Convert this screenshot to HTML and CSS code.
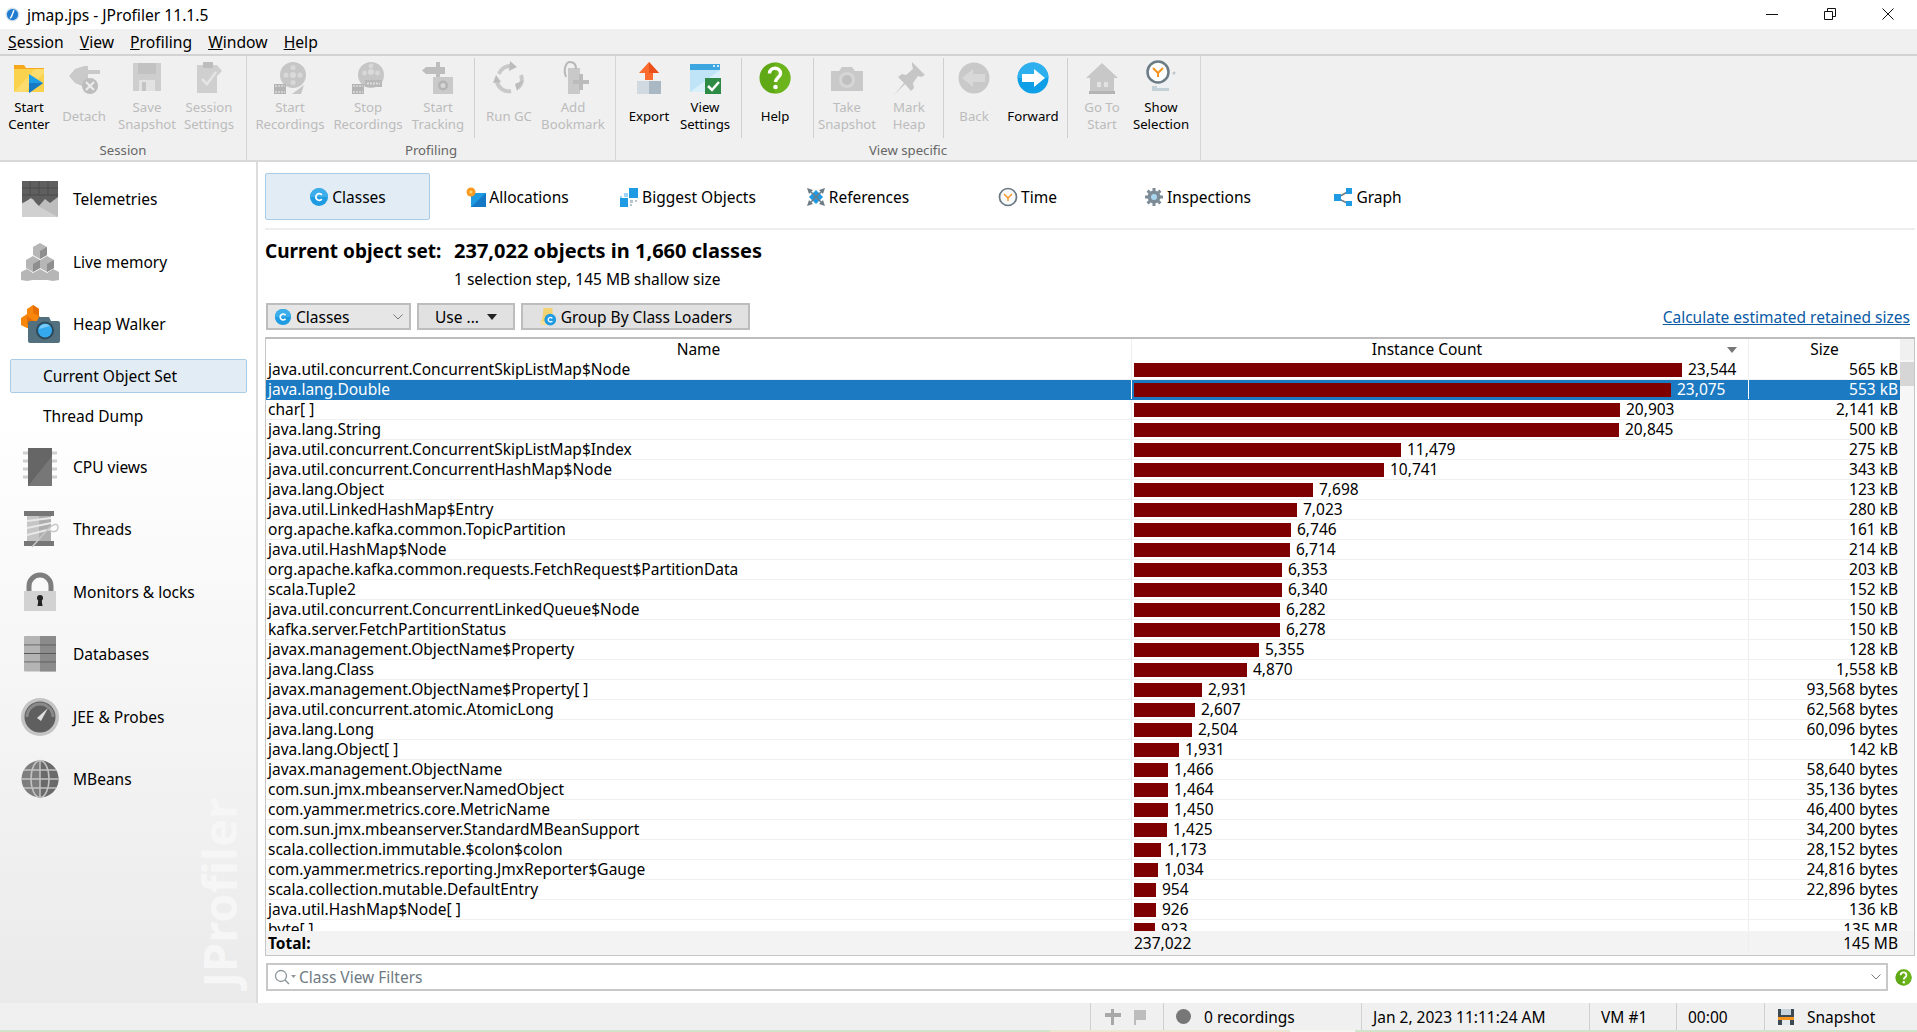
FILE: index.html
```html
<!DOCTYPE html>
<html lang="en">
<head>
<meta charset="utf-8">
<title>jmap.jps - JProfiler 11.1.5</title>
<link rel="stylesheet" href="styles.css">
</head>
<body>
<svg class="defs" aria-hidden="true">
  <symbol id="i-start" viewBox="0 0 36 36"><path d="M3 5h10l2 3h18v4H3z" fill="#f6a81c"/><path d="M3 9h30v23H3z" fill="#fbd24e"/><path d="M3 32L24 9h9v4L14 32z" fill="#fcdc6c"/><path d="M18 14l14 9-14 10z" fill="#1e9de4"/><path d="M18 23h14l-14 10z" fill="#1778c4"/></symbol>
  <symbol id="i-detach" viewBox="0 0 36 36"><path d="M3 16l6-7 9-3h4v4h12v4H22v6h5v3h-5v3h-6l-7-3z" fill="#c9c9c9"/><circle cx="24" cy="26" r="8" fill="#bdbdbd"/><path d="M20 22l8 8M28 22l-8 8" stroke="#eee" stroke-width="2"/></symbol>
  <symbol id="i-save" viewBox="0 0 36 36"><path d="M4 3h28v28H4z" fill="#cecece"/><path d="M9 3h18v11H9z" fill="#c2c2c2"/><path d="M10 20h16v11H10z" fill="#e2e2e2"/><path d="M13 22h4v9h-4z" fill="#c4c4c4"/></symbol>
  <symbol id="i-settings" viewBox="0 0 36 36"><path d="M6 5h20l5 6-5 5v17H6z" fill="#cfcfcf"/><path d="M12 2h10v6H12z" fill="#bdbdbd"/><path d="M11 19l5 5 9-12" fill="none" stroke="#e4e4e4" stroke-width="2.500"/></symbol>
  <symbol id="i-rec" viewBox="0 0 36 36"><circle cx="21" cy="15" r="13" fill="#c6c6c6"/><circle cx="21" cy="15" r="3" fill="#dadada"/><circle cx="21" cy="7.500" r="2.600" fill="#d8d8d8"/><circle cx="14" cy="15" r="2.600" fill="#d8d8d8"/><circle cx="28" cy="15" r="2.600" fill="#d8d8d8"/><circle cx="21" cy="22.500" r="2.600" fill="#d8d8d8"/><path d="M2 24h12v10H2z" fill="#b4b4b4"/><path d="M3 26h10M3 32h10" stroke="#eee" stroke-dasharray="2 1"/><path d="M20 34l12-9-3 9z" fill="#c6c6c6"/></symbol>
  <symbol id="i-stop" viewBox="0 0 36 36"><circle cx="21" cy="15" r="13" fill="#c6c6c6"/><circle cx="21" cy="12" r="3" fill="#dadada"/><circle cx="21" cy="6" r="2.400" fill="#d8d8d8"/><circle cx="14.500" cy="13" r="2.400" fill="#d8d8d8"/><circle cx="27.500" cy="13" r="2.400" fill="#d8d8d8"/><path d="M2 24h12v10H2z" fill="#b4b4b4"/><path d="M3 26h10M3 32h10" stroke="#eee" stroke-dasharray="2 1"/><path d="M15 20h17v7H15z" fill="#b8b8b8"/><path d="M17 23.500h13" stroke="#dcdcdc" stroke-width="2" stroke-dasharray="2 1"/></symbol>
  <symbol id="i-track" viewBox="0 0 36 36"><path d="M16 2h4v5h5v7h-5v3h-4v-3H6l-4-3.500L6 7h10z" fill="#bdbdbd"/><path d="M13 17h20v17H13z" fill="#c9c9c9"/><circle cx="23" cy="25.500" r="5" fill="#b4b4b4"/><circle cx="23" cy="25.500" r="2.500" fill="#d6d6d6"/></symbol>
  <symbol id="i-gc" viewBox="0 0 36 36"><g fill="none" stroke="#c9c9c9" stroke-width="4"><path d="M8 14a12 12 0 0 1 13-8"/><path d="M30 15a12 12 0 0 1-3 13"/><path d="M20 31a12 12 0 0 1-14-9"/></g><path d="M19 1l7 6-8 4zM33 20l-9 4 2 7zM2 23l8-1-5-7z" fill="#bcbcbc"/></symbol>
  <symbol id="i-book" viewBox="0 0 36 36"><path d="M13 8h12v26H13z" fill="#c9c9c9"/><path d="M11 17C8 9 11 2 15 2s6 3 6 7" fill="none" stroke="#b8b8b8" stroke-width="2"/><path d="M24 18h4v6h6v4h-6v6h-4v-6h-6v-4h6z" fill="#bbb" transform="translate(0 -4)"/></symbol>
  <symbol id="i-export" viewBox="0 0 36 36"><path d="M18 2l10 11h-6v7h-8v-7H8z" fill="#fb6b2e"/><path d="M18 2l10 11H18z" fill="#ea4f1c"/><path d="M6 21h24v13H6z" fill="#d1dae0"/><path d="M18 21h12v13H18z" fill="#a9b8c2"/></symbol>
  <symbol id="i-view" viewBox="0 0 36 36"><path d="M3 4h30v28H3z" fill="#d9f0fb"/><path d="M3 4h30v6H3z" fill="#3da5e0"/><path d="M3 32V10h30z" fill="#bfe4f7"/><path d="M26 6h2M30 6h2" stroke="#fff" stroke-width="1.500"/><path d="M18 18h16v16H18z" fill="#2e8b45"/><path d="M21 26l4 4 7-8" fill="none" stroke="#fff" stroke-width="2.500"/></symbol>
  <symbol id="i-help" viewBox="0 0 36 36"><circle cx="18" cy="18" r="15.500" fill="#5fa816"/><path d="M18 2.500a15.500 15.500 0 0 1 0 31z" fill="#71b91f" opacity=".7"/><path d="M12.500 13.500c0-7 11-7 11 0 0 4-5 4-5 8.500" fill="none" stroke="#fff" stroke-width="3.400"/><circle cx="18.500" cy="27" r="2.300" fill="#fff"/></symbol>
  <symbol id="i-camera" viewBox="0 0 36 36"><path d="M2 11h8l3-4h10l3 4h8v20H2z" fill="#c9c9c9"/><circle cx="18" cy="20" r="8" fill="#d6d6d6"/><circle cx="18" cy="20" r="5" fill="#c0c0c0"/></symbol>
  <symbol id="i-pin" viewBox="0 0 36 36"><path d="M21 2l13 13-4 2-3-1-5 7 1 5-3 3-6-7-11 11 10-12-6-6 4-3 4 1 7-6-1-4z" fill="#c6c6c6"/></symbol>
  <symbol id="i-back" viewBox="0 0 36 36"><circle cx="18" cy="18" r="15.500" fill="#c9c9c9"/><path d="M6 18l11-9v5h12v8H17v5z" fill="#d8d8d8"/></symbol>
  <symbol id="i-fwd" viewBox="0 0 36 36"><circle cx="18" cy="18" r="15.500" fill="#0e9fe6"/><path d="M2.500 18a15.500 15.500 0 0 1 31 0z" fill="#2fb0ee"/><path d="M30 18l-11-9v5H7v8h12v5z" fill="#fff"/></symbol>
  <symbol id="i-home" viewBox="0 0 36 36"><path d="M18 3L2 18h4v14h24V18h4z" fill="#c8c8c8"/><path d="M13 22h4v5h-4zM20 22h4v5h-4z" fill="#e2e2e2"/><path d="M5 31h26v3H5z" fill="#b4b4b4"/></symbol>
  <symbol id="i-show" viewBox="0 0 36 36"><path d="M9 26h17v5H9z" fill="#c3d0d8"/><path d="M14 15h15v13H14z" fill="#eef1f3"/><circle cx="31" cy="13" r="1.500" fill="#bcc6cc"/><circle cx="15" cy="12" r="10.500" fill="#fff" stroke="#6c7c86" stroke-width="2.500"/><path d="M10 8l5 5 5-5M15 13v4" fill="none" stroke="#f7941d" stroke-width="2"/></symbol>
  <symbol id="i-class" viewBox="0 0 20 20"><circle cx="10" cy="10" r="9" fill="#1f9be2"/><path d="M1 10a9 9 0 0 1 18 0z" fill="#3caeeb"/><path d="M12.800 8a3.300 3.300 0 1 0 0 4" fill="none" stroke="#fff" stroke-width="1.800"/></symbol>
  <symbol id="i-alloc" viewBox="0 0 20 20"><path d="M5 6h15v14H5z" fill="#1e9be2"/><path d="M5 20L20 6v14z" fill="#1478c4"/><circle cx="5" cy="5" r="4.500" fill="#f79a1e"/><circle cx="5" cy="5" r="1.600" fill="#ffd27a"/></symbol>
  <symbol id="i-big" viewBox="0 0 20 20"><path d="M10 1h9v10h-9z" fill="#1e9be2"/><path d="M1 11h8v9H1z" fill="#1e9be2"/><path d="M5 6h4v4H5zM1 9h2v2H1z" fill="#9fd4f3"/><path d="M11 13h3v3h-3zM16 13h2v2h-2zM11 17h2v2h-2z" fill="#b8c4cc"/></symbol>
  <symbol id="i-refs" viewBox="0 0 20 20"><path d="M5 5h10v10H5z" fill="#1e9be2" transform="rotate(45 10 10)"/><path d="M1 1l6 2-4 4zM19 1l-6 2 4 4zM1 19l6-2-4-4zM19 19l-6-2 4-4z" fill="#6d7c86"/><path d="M3 3l14 14M17 3L3 17" stroke="#6d7c86" stroke-width="1.600"/></symbol>
  <symbol id="i-time" viewBox="0 0 20 20"><circle cx="10" cy="10" r="8.500" fill="#f7f9fa" stroke="#67767f" stroke-width="1.700"/><path d="M6 7l4 4 4-4M10 11v3" fill="none" stroke="#f7941d" stroke-width="1.400"/></symbol>
  <symbol id="i-gear" viewBox="0 0 20 20"><circle cx="10" cy="10" r="6.500" fill="#7d8c96"/><g stroke="#7d8c96" stroke-width="3"><path d="M10 1v18M1 10h18M3.600 3.600l12.800 12.800M16.400 3.600L3.600 16.400"/></g><circle cx="10" cy="10" r="3" fill="#a9d6f0"/></symbol>
  <symbol id="i-graph" viewBox="0 0 20 20"><path d="M4 11L16 4M4 11l12 6" stroke="#6d7c86" stroke-width="1.500"/><path d="M1 7h7v7H1z" fill="#1e9be2"/><path d="M13 1h6v6h-6zM13 14h6v5h-6z" fill="#1e9be2"/></symbol>
  <symbol id="i-loader" viewBox="0 0 20 20"><path d="M5 0h10v15H1c2-1 3-3 3-5z" fill="#f2d271"/><path d="M1 15h12v4H3z" fill="#f6e09a"/><circle cx="12.500" cy="13" r="6.500" fill="#1f9be2"/><path d="M14.800 11.500a2.500 2.500 0 1 0 0 3" fill="none" stroke="#fff" stroke-width="1.500"/></symbol>
  <symbol id="s-tele" viewBox="0 0 40 40"><path d="M2 2h36v36H2z" fill="#bdbdbd"/><path d="M2 2h36v16l-8 6-5-4-7 8-5-8-11 4z" fill="#5f5f5f"/><path d="M2 25l9-6 9 9 18 10H2z" fill="#d0d0d0"/><path d="M2 9h36M2 16h36M10 2v14M19 2v14M28 2v14" stroke="#4c4c4c"/></symbol>
  <symbol id="s-live" viewBox="0 0 40 40"><g fill="#b6b6b6"><path d="M20 1l7 4v8l-7 4-7-4V5z"/><path d="M13 14l7 4v8l-7 4-7-4v-8z"/><path d="M27 14l7 4v8l-7 4-7-4v-8z"/><path d="M7 27l6 4v7l-6 1-6-1v-8z"/><path d="M20 27l7 4v7h-14v-7z"/><path d="M33 27l6 3v8l-6 1-6-1v-7z"/></g><path d="M20 9v8l7-4V5zM13 22v8l7-4v-8zM27 22v8l7-4v-8z" fill="#8e8e8e"/></symbol>
  <symbol id="s-heap" viewBox="0 0 40 40"><path d="M13 1l6 4v7l6 4v8H7l-6-3v-7l6-4V5z" fill="#f7860b"/><path d="M13 9V1l6 4v7zM7 20v-8l6 4v7z" fill="#e56f00"/><path d="M10 17h7l2-4h10l2 4h7a2 2 0 0 1 2 2v18a2 2 0 0 1-2 2H10a2 2 0 0 1-2-2V19a2 2 0 0 1 2-2z" fill="#53707f"/><circle cx="25" cy="26.500" r="9" fill="#2c4959"/><circle cx="25" cy="26.500" r="7" fill="#35a9ee"/><path d="M19 25a6.500 6.500 0 0 1 11-3z" fill="#7accf6"/></symbol>
  <symbol id="s-cpu" viewBox="0 0 40 40"><path d="M3 6h34M3 14h34M3 22h34M3 30h34" stroke="#cfcfcf" stroke-width="3"/><path d="M8 1h24v38H8z" fill="#5e5e5e"/><path d="M8 39L32 6v33z" fill="#777"/><path d="M8 1h24v8L8 39z" fill="#666"/></symbol>
  <symbol id="s-thread" viewBox="0 0 40 40"><path d="M4 2h30v5H4zM4 32h30v5H4z" fill="#767676"/><path d="M7 7h24v25H7z" fill="#c6c6c6"/><path d="M19 7h12v25H19z" fill="#aeaeae"/><path d="M7 12l24-3M7 19l24-5M7 26l24-6" stroke="#e8e8e8" stroke-width="2"/><path d="M12 38L30 18q8-6 8 1-1 5-8 3" fill="none" stroke="#c8c8c8" stroke-width="1.500"/></symbol>
  <symbol id="s-lock" viewBox="0 0 40 40"><path d="M9 21V14a11 11 0 0 1 22 0v7" fill="none" stroke="#7e7e7e" stroke-width="5"/><path d="M4 19h32v20H4z" fill="#d2d2d2"/><circle cx="20" cy="26" r="3" fill="#222"/><path d="M18.500 27h3l1 7h-5z" fill="#222"/></symbol>
  <symbol id="s-db" viewBox="0 0 40 40"><g fill="#b4b4b4"><rect x="4" y="2" width="32" height="9" rx="1"/><rect x="4" y="11.500" width="32" height="8"/><rect x="4" y="20" width="32" height="8"/><rect x="4" y="28.500" width="32" height="9" rx="1"/></g><path d="M20 2h16v35.500H20z" fill="#7e7e7e" opacity=".75"/><path d="M4 11h32M4 19.500h32M4 28h32" stroke="#5a5a5a"/></symbol>
  <symbol id="s-jee" viewBox="0 0 40 40"><circle cx="20" cy="20" r="19" fill="#c4c4c4"/><circle cx="20" cy="20" r="15.500" fill="#5f5f5f"/><path d="M7 20a13 13 0 0 1 26 0" fill="none" stroke="#8a8a8a" stroke-width="3"/><path d="M28 11L21 24l-4-3z" fill="#e0e0e0"/></symbol>
  <symbol id="s-mb" viewBox="0 0 40 40"><circle cx="20" cy="20" r="18.500" fill="#7d7d7d"/><path d="M20 1.500a18.500 18.500 0 0 1 0 37z" fill="#6a6a6a"/><g fill="none" stroke="#c2c2c2" stroke-width="1.500"><ellipse cx="20" cy="20" rx="9" ry="18.500"/><path d="M20 1.500v37M1.500 20h37M4 11h32M4 29h32"/></g></symbol>
  <symbol id="i-post" viewBox="0 0 18 18"><path d="M7 1h3v4h7v4h-7v8H7V9H1V5h6z" fill="#a8a8a8"/></symbol>
  <symbol id="i-flag" viewBox="0 0 18 18"><path d="M3 2h12v10H5v5H3z" fill="#bdbdbd"/></symbol>
  <symbol id="i-disk" viewBox="0 0 18 18"><path d="M1 1h16v16H1z" fill="#3c4a53"/><path d="M4 1h10v6H4z" fill="#c9d5dc"/><path d="M1 9h16v3H1z" fill="#f7941d"/><path d="M5 12h8v5H5z" fill="#e6ebee"/></symbol>
  <symbol id="i-search" viewBox="0 0 24 18"><circle cx="8" cy="8" r="5.500" fill="none" stroke="#8c969c" stroke-width="1.300"/><path d="M12 12l4 4" stroke="#8c969c" stroke-width="1.400"/><path d="M18 7h5l-2.500 3z" fill="#8c969c"/></symbol>
</svg>

<header class="titlebar">
  <svg class="appicon" viewBox="0 0 16 16"><circle cx="8" cy="8" r="7.500" fill="#d5e3ee"/><circle cx="8" cy="8" r="6" fill="#1f7cd0"/><path d="M9.500 3.500L7 10l-1.500 2" fill="none" stroke="#fff" stroke-width="1.500"/></svg>
  <span class="apptitle">jmap.jps - JProfiler 11.1.5</span>
  <div class="winctl">
    <svg class="wc" viewBox="0 0 12 12"><path d="M0 6.500h12" stroke="#111"/></svg>
    <svg class="wc" viewBox="0 0 12 12"><path d="M.5 3.500h8v8h-8zM3.500 3.500v-3h8v8h-3" fill="none" stroke="#111"/></svg>
    <svg class="wc" viewBox="0 0 12 12"><path d="M.5.500l11 11M11.500.500l-11 11" stroke="#111"/></svg>
  </div>
</header>

<nav class="menubar">
  <span class="mi"><u>S</u>ession</span><span class="mi"><u>V</u>iew</span><span class="mi"><u>P</u>rofiling</span><span class="mi"><u>W</u>indow</span><span class="mi"><u>H</u>elp</span>
</nav>

<div class="toolbar">
  <section class="group">
    <div class="subs pad-g1">
      <div class="tb w54"><svg class="ti"><use href="#i-start"/></svg><span class="tl">Start<br>Center</span></div>
      <div class="tb off w56"><svg class="ti"><use href="#i-detach"/></svg><span class="tl one">Detach</span></div>
      <div class="tb off w70"><svg class="ti"><use href="#i-save"/></svg><span class="tl">Save<br>Snapshot</span></div>
      <div class="tb off w54"><svg class="ti"><use href="#i-settings"/></svg><span class="tl">Session<br>Settings</span></div>
    </div>
    <div class="gl">Session</div>
  </section>
  <section class="group">
    <div class="subs">
      <div class="sub pad-a">
        <div class="tb off w76"><svg class="ti"><use href="#i-rec"/></svg><span class="tl">Start<br>Recordings</span></div>
        <div class="tb off w80"><svg class="ti"><use href="#i-stop"/></svg><span class="tl">Stop<br>Recordings</span></div>
        <div class="tb off w60"><svg class="ti"><use href="#i-track"/></svg><span class="tl">Start<br>Tracking</span></div>
      </div>
      <div class="sub last pad-b">
        <div class="tb off w68"><svg class="ti"><use href="#i-gc"/></svg><span class="tl one">Run GC</span></div>
        <div class="tb off w60"><svg class="ti"><use href="#i-book"/></svg><span class="tl">Add<br>Bookmark</span></div>
      </div>
    </div>
    <div class="gl">Profiling</div>
  </section>
  <section class="group">
    <div class="subs">
      <div class="sub pad-c">
        <div class="tb w58"><svg class="ti"><use href="#i-export"/></svg><span class="tl one">Export</span></div>
        <div class="tb w54"><svg class="ti"><use href="#i-view"/></svg><span class="tl">View<br>Settings</span></div>
      </div>
      <div class="sub pad-d">
        <div class="tb w66"><svg class="ti"><use href="#i-help"/></svg><span class="tl one">Help</span></div>
      </div>
      <div class="sub pad-d">
        <div class="tb off w66"><svg class="ti"><use href="#i-camera"/></svg><span class="tl">Take<br>Snapshot</span></div>
        <div class="tb off w58"><svg class="ti"><use href="#i-pin"/></svg><span class="tl">Mark<br>Heap</span></div>
      </div>
      <div class="sub pad-d">
        <div class="tb off w60"><svg class="ti"><use href="#i-back"/></svg><span class="tl one">Back</span></div>
        <div class="tb w58"><svg class="ti"><use href="#i-fwd"/></svg><span class="tl one">Forward</span></div>
      </div>
      <div class="sub last pad-e">
        <div class="tb off w62"><svg class="ti"><use href="#i-home"/></svg><span class="tl">Go To<br>Start</span></div>
        <div class="tb w56"><svg class="ti"><use href="#i-show"/></svg><span class="tl">Show<br>Selection</span></div>
      </div>
    </div>
    <div class="gl">View specific</div>
  </section>
</div>

<div class="workspace">
  <aside class="sidebar">
    <div class="si"><svg class="sic"><use href="#s-tele"/></svg><span>Telemetries</span></div>
    <div class="si"><svg class="sic"><use href="#s-live"/></svg><span>Live memory</span></div>
    <div class="si"><svg class="sic"><use href="#s-heap"/></svg><span>Heap Walker</span></div>
    <div class="sub-si"><span class="sub-in sel">Current Object Set</span></div>
    <div class="sub-si"><span class="sub-in">Thread Dump</span></div>
    <div class="si"><svg class="sic"><use href="#s-cpu"/></svg><span>CPU views</span></div>
    <div class="si"><svg class="sic"><use href="#s-thread"/></svg><span>Threads</span></div>
    <div class="si"><svg class="sic"><use href="#s-lock"/></svg><span>Monitors &amp; locks</span></div>
    <div class="si"><svg class="sic"><use href="#s-db"/></svg><span>Databases</span></div>
    <div class="si"><svg class="sic"><use href="#s-jee"/></svg><span>JEE &amp; Probes</span></div>
    <div class="si"><svg class="sic"><use href="#s-mb"/></svg><span>MBeans</span></div>
    <div class="watermark">JProfiler</div>
  </aside>

  <main class="main">
    <div class="tabs">
      <div class="tab active"><svg class="tic"><use href="#i-class"/></svg>Classes</div>
      <div class="tab"><svg class="tic"><use href="#i-alloc"/></svg>Allocations</div>
      <div class="tab"><svg class="tic"><use href="#i-big"/></svg>Biggest Objects</div>
      <div class="tab"><svg class="tic"><use href="#i-refs"/></svg>References</div>
      <div class="tab"><svg class="tic"><use href="#i-time"/></svg>Time</div>
      <div class="tab"><svg class="tic"><use href="#i-gear"/></svg>Inspections</div>
      <div class="tab"><svg class="tic"><use href="#i-graph"/></svg>Graph</div>
    </div>
    <div class="head">
      <h1 class="h-label">Current object set:</h1>
      <h1 class="h-value">237,022 objects in 1,660 classes</h1>
      <p class="h-sub">1 selection step, 145 MB shallow size</p>
    </div>
    <div class="controls">
      <div class="btn combo"><svg class="bic"><use href="#i-class"/></svg><span>Classes</span><svg class="chev" viewBox="0 0 10 6"><path d="M.5.500L5 5 9.500.500" fill="none" stroke="#777"/></svg></div>
      <div class="btn use">Use ...<span class="tri"></span></div>
      <div class="btn group-btn"><svg class="bic"><use href="#i-loader"/></svg>Group By Class Loaders</div>
      <a class="link" href="#">Calculate estimated retained sizes</a>
    </div>
    <div class="table">
      <div class="thead">
        <div class="th c-name">Name</div>
        <div class="th c-count">Instance Count<span class="sort"></span></div>
        <div class="th c-size">Size</div>
        <div class="th-scroll"></div>
      </div>
      <div class="tbody">
        <div class="rows">
          <div class="row"><div class="c-name td">java.util.concurrent.ConcurrentSkipListMap$Node</div><div class="c-count td"><i class="bar" style="width:548px"></i>23,544</div><div class="c-size td">565 kB</div></div>
          <div class="row selected"><div class="c-name td">java.lang.Double</div><div class="c-count td"><i class="bar" style="width:537px"></i>23,075</div><div class="c-size td">553 kB</div></div>
          <div class="row"><div class="c-name td">char[ ]</div><div class="c-count td"><i class="bar" style="width:486px"></i>20,903</div><div class="c-size td">2,141 kB</div></div>
          <div class="row"><div class="c-name td">java.lang.String</div><div class="c-count td"><i class="bar" style="width:485px"></i>20,845</div><div class="c-size td">500 kB</div></div>
          <div class="row"><div class="c-name td">java.util.concurrent.ConcurrentSkipListMap$Index</div><div class="c-count td"><i class="bar" style="width:267px"></i>11,479</div><div class="c-size td">275 kB</div></div>
          <div class="row"><div class="c-name td">java.util.concurrent.ConcurrentHashMap$Node</div><div class="c-count td"><i class="bar" style="width:250px"></i>10,741</div><div class="c-size td">343 kB</div></div>
          <div class="row"><div class="c-name td">java.lang.Object</div><div class="c-count td"><i class="bar" style="width:179px"></i>7,698</div><div class="c-size td">123 kB</div></div>
          <div class="row"><div class="c-name td">java.util.LinkedHashMap$Entry</div><div class="c-count td"><i class="bar" style="width:163px"></i>7,023</div><div class="c-size td">280 kB</div></div>
          <div class="row"><div class="c-name td">org.apache.kafka.common.TopicPartition</div><div class="c-count td"><i class="bar" style="width:157px"></i>6,746</div><div class="c-size td">161 kB</div></div>
          <div class="row"><div class="c-name td">java.util.HashMap$Node</div><div class="c-count td"><i class="bar" style="width:156px"></i>6,714</div><div class="c-size td">214 kB</div></div>
          <div class="row"><div class="c-name td">org.apache.kafka.common.requests.FetchRequest$PartitionData</div><div class="c-count td"><i class="bar" style="width:148px"></i>6,353</div><div class="c-size td">203 kB</div></div>
          <div class="row"><div class="c-name td">scala.Tuple2</div><div class="c-count td"><i class="bar" style="width:148px"></i>6,340</div><div class="c-size td">152 kB</div></div>
          <div class="row"><div class="c-name td">java.util.concurrent.ConcurrentLinkedQueue$Node</div><div class="c-count td"><i class="bar" style="width:146px"></i>6,282</div><div class="c-size td">150 kB</div></div>
          <div class="row"><div class="c-name td">kafka.server.FetchPartitionStatus</div><div class="c-count td"><i class="bar" style="width:146px"></i>6,278</div><div class="c-size td">150 kB</div></div>
          <div class="row"><div class="c-name td">javax.management.ObjectName$Property</div><div class="c-count td"><i class="bar" style="width:125px"></i>5,355</div><div class="c-size td">128 kB</div></div>
          <div class="row"><div class="c-name td">java.lang.Class</div><div class="c-count td"><i class="bar" style="width:113px"></i>4,870</div><div class="c-size td">1,558 kB</div></div>
          <div class="row"><div class="c-name td">javax.management.ObjectName$Property[ ]</div><div class="c-count td"><i class="bar" style="width:68px"></i>2,931</div><div class="c-size td">93,568 bytes</div></div>
          <div class="row"><div class="c-name td">java.util.concurrent.atomic.AtomicLong</div><div class="c-count td"><i class="bar" style="width:61px"></i>2,607</div><div class="c-size td">62,568 bytes</div></div>
          <div class="row"><div class="c-name td">java.lang.Long</div><div class="c-count td"><i class="bar" style="width:58px"></i>2,504</div><div class="c-size td">60,096 bytes</div></div>
          <div class="row"><div class="c-name td">java.lang.Object[ ]</div><div class="c-count td"><i class="bar" style="width:45px"></i>1,931</div><div class="c-size td">142 kB</div></div>
          <div class="row"><div class="c-name td">javax.management.ObjectName</div><div class="c-count td"><i class="bar" style="width:34px"></i>1,466</div><div class="c-size td">58,640 bytes</div></div>
          <div class="row"><div class="c-name td">com.sun.jmx.mbeanserver.NamedObject</div><div class="c-count td"><i class="bar" style="width:34px"></i>1,464</div><div class="c-size td">35,136 bytes</div></div>
          <div class="row"><div class="c-name td">com.yammer.metrics.core.MetricName</div><div class="c-count td"><i class="bar" style="width:34px"></i>1,450</div><div class="c-size td">46,400 bytes</div></div>
          <div class="row"><div class="c-name td">com.sun.jmx.mbeanserver.StandardMBeanSupport</div><div class="c-count td"><i class="bar" style="width:33px"></i>1,425</div><div class="c-size td">34,200 bytes</div></div>
          <div class="row"><div class="c-name td">scala.collection.immutable.$colon$colon</div><div class="c-count td"><i class="bar" style="width:27px"></i>1,173</div><div class="c-size td">28,152 bytes</div></div>
          <div class="row"><div class="c-name td">com.yammer.metrics.reporting.JmxReporter$Gauge</div><div class="c-count td"><i class="bar" style="width:24px"></i>1,034</div><div class="c-size td">24,816 bytes</div></div>
          <div class="row"><div class="c-name td">scala.collection.mutable.DefaultEntry</div><div class="c-count td"><i class="bar" style="width:22px"></i>954</div><div class="c-size td">22,896 bytes</div></div>
          <div class="row"><div class="c-name td">java.util.HashMap$Node[ ]</div><div class="c-count td"><i class="bar" style="width:22px"></i>926</div><div class="c-size td">136 kB</div></div>
          <div class="row"><div class="c-name td">byte[ ]</div><div class="c-count td"><i class="bar" style="width:21px"></i>923</div><div class="c-size td">135 MB</div></div>
        </div>
        <div class="scroll"><div class="thumb"></div></div>
      </div>
      <div class="tfoot">
        <div class="c-name td total">Total:</div>
        <div class="c-count td">237,022</div>
        <div class="c-size td">145 MB</div>
      </div>
    </div>
    <div class="filter-row">
      <div class="filter"><svg class="sic-s"><use href="#i-search"/></svg><span class="ph">Class View Filters</span><svg class="chev" viewBox="0 0 10 6"><path d="M.5.500L5 5 9.500.500" fill="none" stroke="#777"/></svg></div>
      <svg class="fhelp"><use href="#i-help"/></svg>
    </div>
  </main>
</div>

<footer class="status">
  <div class="st st-1"></div>
  <div class="st st-2"><svg class="sti"><use href="#i-post"/></svg><svg class="sti"><use href="#i-flag"/></svg></div>
  <div class="st st-3"><span class="dot"></span>0 recordings</div>
  <div class="st st-4">Jan 2, 2023 11:11:24 AM</div>
  <div class="st st-5">VM #1</div>
  <div class="st st-6">00:00</div>
  <div class="st st-7"><svg class="sti"><use href="#i-disk"/></svg>Snapshot</div>
</footer>
<div class="strip"></div>
</body>
</html>
```

FILE: styles.css
```css
* { box-sizing: border-box; }
html, body { margin: 0; padding: 0; height: 100%; overflow: hidden; }
body {
  display: flex;
  flex-direction: column;
  width: 1917px;
  height: 1032px;
  background: #fff;
  color: #000;
  font-family: "Noto Sans", "Open Sans", sans-serif;
  font-size: 15.500px;
}
.defs { position: absolute; width: 0; height: 0; }

.titlebar { height: 29px; display: flex; align-items: center; padding-left: 5px; flex: none; }
.appicon { width: 15px; height: 15px; margin-right: 7px; }
.apptitle { font-size: 15.600px; }
.winctl { margin-left: auto; display: flex; padding-right: 23px; }
.wc { width: 12px; height: 12px; margin-left: 46px; margin-top: -2px; }
.winctl .wc:first-child { margin-left: 0; }

.menubar { height: 25px; background: #f0f0f0; display: flex; align-items: center; flex: none; padding-left: 8px; }
.mi { font-size: 15.700px; margin-right: 16px; }

.toolbar { height: 108px; flex: none; display: flex; background: #f0f0f0; border-top: 2px solid #d2d2d2; border-bottom: 2px solid #d8d8d8; }
.group { display: flex; flex-direction: column; border-right: 1px solid #d6d6d6; }
.subs { display: flex; height: 84px; }
.sub { display: flex; height: 80px; border-right: 1px solid #d0d0d0; margin-top: 2px; }
.sub.last { border-right: 0; }
.pad-g1 { padding: 0 10px 0 2px; }
.pad-a { padding: 0 6px 0 5px; }
.pad-b { padding: 0 12px 0 0; }
.pad-c { padding: 0 9px 0 4px; }
.pad-d { padding: 0 5px 0 0; }
.pad-e { padding: 0 11px 0 3px; }
.tb { display: flex; flex-direction: column; align-items: center; flex: none; padding-top: 2px; }
.subs.pad-g1 .tb { padding-top: 4px; }
.ti { width: 36px; height: 36px; flex: none; margin-bottom: 3px; }
.tl { display: block; height: 35px; text-align: center; font-size: 13.200px; line-height: 17px; white-space: nowrap; }
.tl.one { line-height: 35px; }
.off { color: #bcbcbc; }
.w54 { width: 54px; } .w56 { width: 56px; } .w58 { width: 58px; } .w60 { width: 60px; }
.w62 { width: 62px; } .w66 { width: 66px; } .w68 { width: 68px; } .w70 { width: 70px; }
.w76 { width: 76px; } .w80 { width: 80px; }
.gl { text-align: center; font-size: 13.200px; line-height: 20px; color: #666; }

.workspace { flex: 1; min-height: 0; display: flex; }
.sidebar {
  position: relative;
  width: 258px;
  flex: none;
  padding-top: 6px;
  border-right: 2px solid #dcdcdc;
  background: linear-gradient(#fff 0%, #fff 30%, #eaeaea 100%);
}
.si { height: 62.500px; display: flex; align-items: center; padding-left: 20px; }
.sic { width: 40px; height: 40px; margin-right: 13px; flex: none; }
.sub-si { height: 40px; padding: 3px 9px 3px 10px; }
.sub-in { display: flex; align-items: center; height: 34px; padding-left: 32px; border: 1px solid transparent; border-radius: 2px; }
.sel { background: #e1ecf5; border-color: #a9cde8; }
.watermark {
  position: absolute;
  left: 194px;
  bottom: 16px;
  font-size: 47px;
  font-weight: 700;
  line-height: 50px;
  color: #f6f6f6;
  writing-mode: vertical-rl;
  transform: rotate(180deg);
}

.main { flex: 1; min-width: 0; display: flex; flex-direction: column; padding: 11px 2px 12px 7px; }
.tabs { display: flex; height: 57px; flex: none; padding-bottom: 8px; border-bottom: 2px solid #eee; gap: 5px; }
.tab { width: 165px; display: flex; align-items: center; justify-content: center; border: 1px solid transparent; border-radius: 2px; }
.tab.active { background: #e1ecf5; border-color: #a9cde8; }
.tic { width: 20px; height: 20px; margin-right: 3px; flex: none; }

.head { display: grid; grid-template-columns: 189px 1fr; flex: none; margin-top: 8px; }
.h-label { margin: 0; font-size: 19px; line-height: 26px; font-weight: 700; }
.h-value { margin: 0; font-size: 20px; line-height: 26px; font-weight: 700; }
.h-sub { grid-column: 2; margin: 4px 0 0; font-size: 15.500px; line-height: 22px; }

.controls { display: flex; flex: none; height: 27px; margin-top: 13px; gap: 6px; padding-left: 1px; align-items: stretch; }
.btn { display: flex; align-items: center; justify-content: center; background: #e1e1e1; border: 2px solid #bdbdbd; }
.combo { width: 145px; justify-content: flex-start; padding-left: 6px; background: #e6e6e6; }
.use { width: 98px; }
.group-btn { width: 229px; }
.bic { width: 18px; height: 18px; margin-right: 4px; flex: none; }
.chev { width: 10px; height: 6px; margin-left: auto; margin-right: 6px; flex: none; }
.tri { width: 0; height: 0; margin-left: 8px; border: 5px solid transparent; border-top: 6px solid #222; border-bottom: 0; }
.link { margin-left: auto; align-self: center; color: #0b5aa6; margin-right: 5px; }

.table { flex: 1; min-height: 0; margin-top: 7px; display: flex; flex-direction: column; border: 1px solid #c6c6c6; border-top: 2px solid #bdbdbd; }
.thead { display: flex; height: 21px; flex: none; }
.th { text-align: center; line-height: 21px; position: relative; }
.c-name { width: 865px; flex: none; }
.c-count { width: 618px; flex: none; }
.c-size { width: 151px; flex: none; }
.th.c-count { border-left: 1px solid #eee; border-right: 1px solid #eee; padding-right: 26px; }
.th-scroll { flex: 1; background: #f0f0f0; }
.sort { position: absolute; right: 11px; top: 8px; border: 5px solid transparent; border-top: 6px solid #777; border-bottom: 0; }
.tbody { flex: 1; min-height: 0; display: flex; overflow: hidden; }
.rows { width: 1634px; flex: none; }
.row { display: flex; height: 20px; border-bottom: 1px solid #f0f0f0; }
.td { line-height: 19px; white-space: nowrap; }
.row .c-name { padding-left: 2px; }
.row .c-count, .tfoot .c-count { display: flex; align-items: center; padding-left: 2px; border-left: 1px solid #eee; border-right: 1px solid #eee; }
.bar { display: block; height: 14px; margin-right: 6px; background: #7f0000; flex: none; }
.c-size.td { text-align: right; padding-right: 2px; }
.row.selected { background: #1b7ac2; color: #fff; border-bottom-color: #1b7ac2; }
.row.selected .c-count { border-color: #fff; }
.scroll { flex: 1; background: #f6f6f6; padding-top: 2px; background-clip: padding-box; }
.thumb { height: 24px; background: #d6d6d6; }
.tfoot { display: flex; height: 24px; flex: none; background: #f3f3f3; align-items: center; }
.total { font-weight: 700; padding-left: 2px; }

.filter-row { display: flex; flex: none; height: 28px; margin-top: 7px; align-items: center; padding-left: 1px; gap: 6px; }
.filter { flex: 1; height: 28px; display: flex; align-items: center; border: 2px solid #c8c8c8; padding-left: 5px; }
.sic-s { width: 24px; height: 18px; margin-right: 2px; flex: none; }
.ph { color: #6f7a82; }
.filter .chev { margin-right: 5px; }
.fhelp { width: 19px; height: 19px; flex: none; margin-right: 2px; }

.status { height: 27px; flex: none; display: flex; align-items: center; background: #f0f0f0; }
.st { height: 100%; display: flex; align-items: center; border-left: 1px solid #d0d0d0; flex: none; }
.st-1 { width: 1090px; border-left: 0; }
.st-2 { width: 73px; padding-left: 13px; gap: 9px; }
.st-3 { width: 198px; padding-left: 12px; }
.st-4 { width: 228px; padding-left: 11px; }
.st-5 { width: 87px; padding-left: 11px; }
.st-6 { width: 88px; padding-left: 11px; }
.st-7 { flex: 1; padding-left: 12px; }
.sti { width: 18px; height: 18px; flex: none; }
.st-7 .sti { margin-right: 12px; }
.dot { width: 15px; height: 15px; border-radius: 50%; background: #777; margin-right: 13px; flex: none; }
.strip { height: 2px; flex: none; background: linear-gradient(90deg, #cfe4c9 0, #cfe4c9 1050px, #ebe7d2 1050px, #ebe7d2 1290px, #f4f4f0 1290px, #f4f4f0 1355px, #cfe4c9 1355px); }
```
